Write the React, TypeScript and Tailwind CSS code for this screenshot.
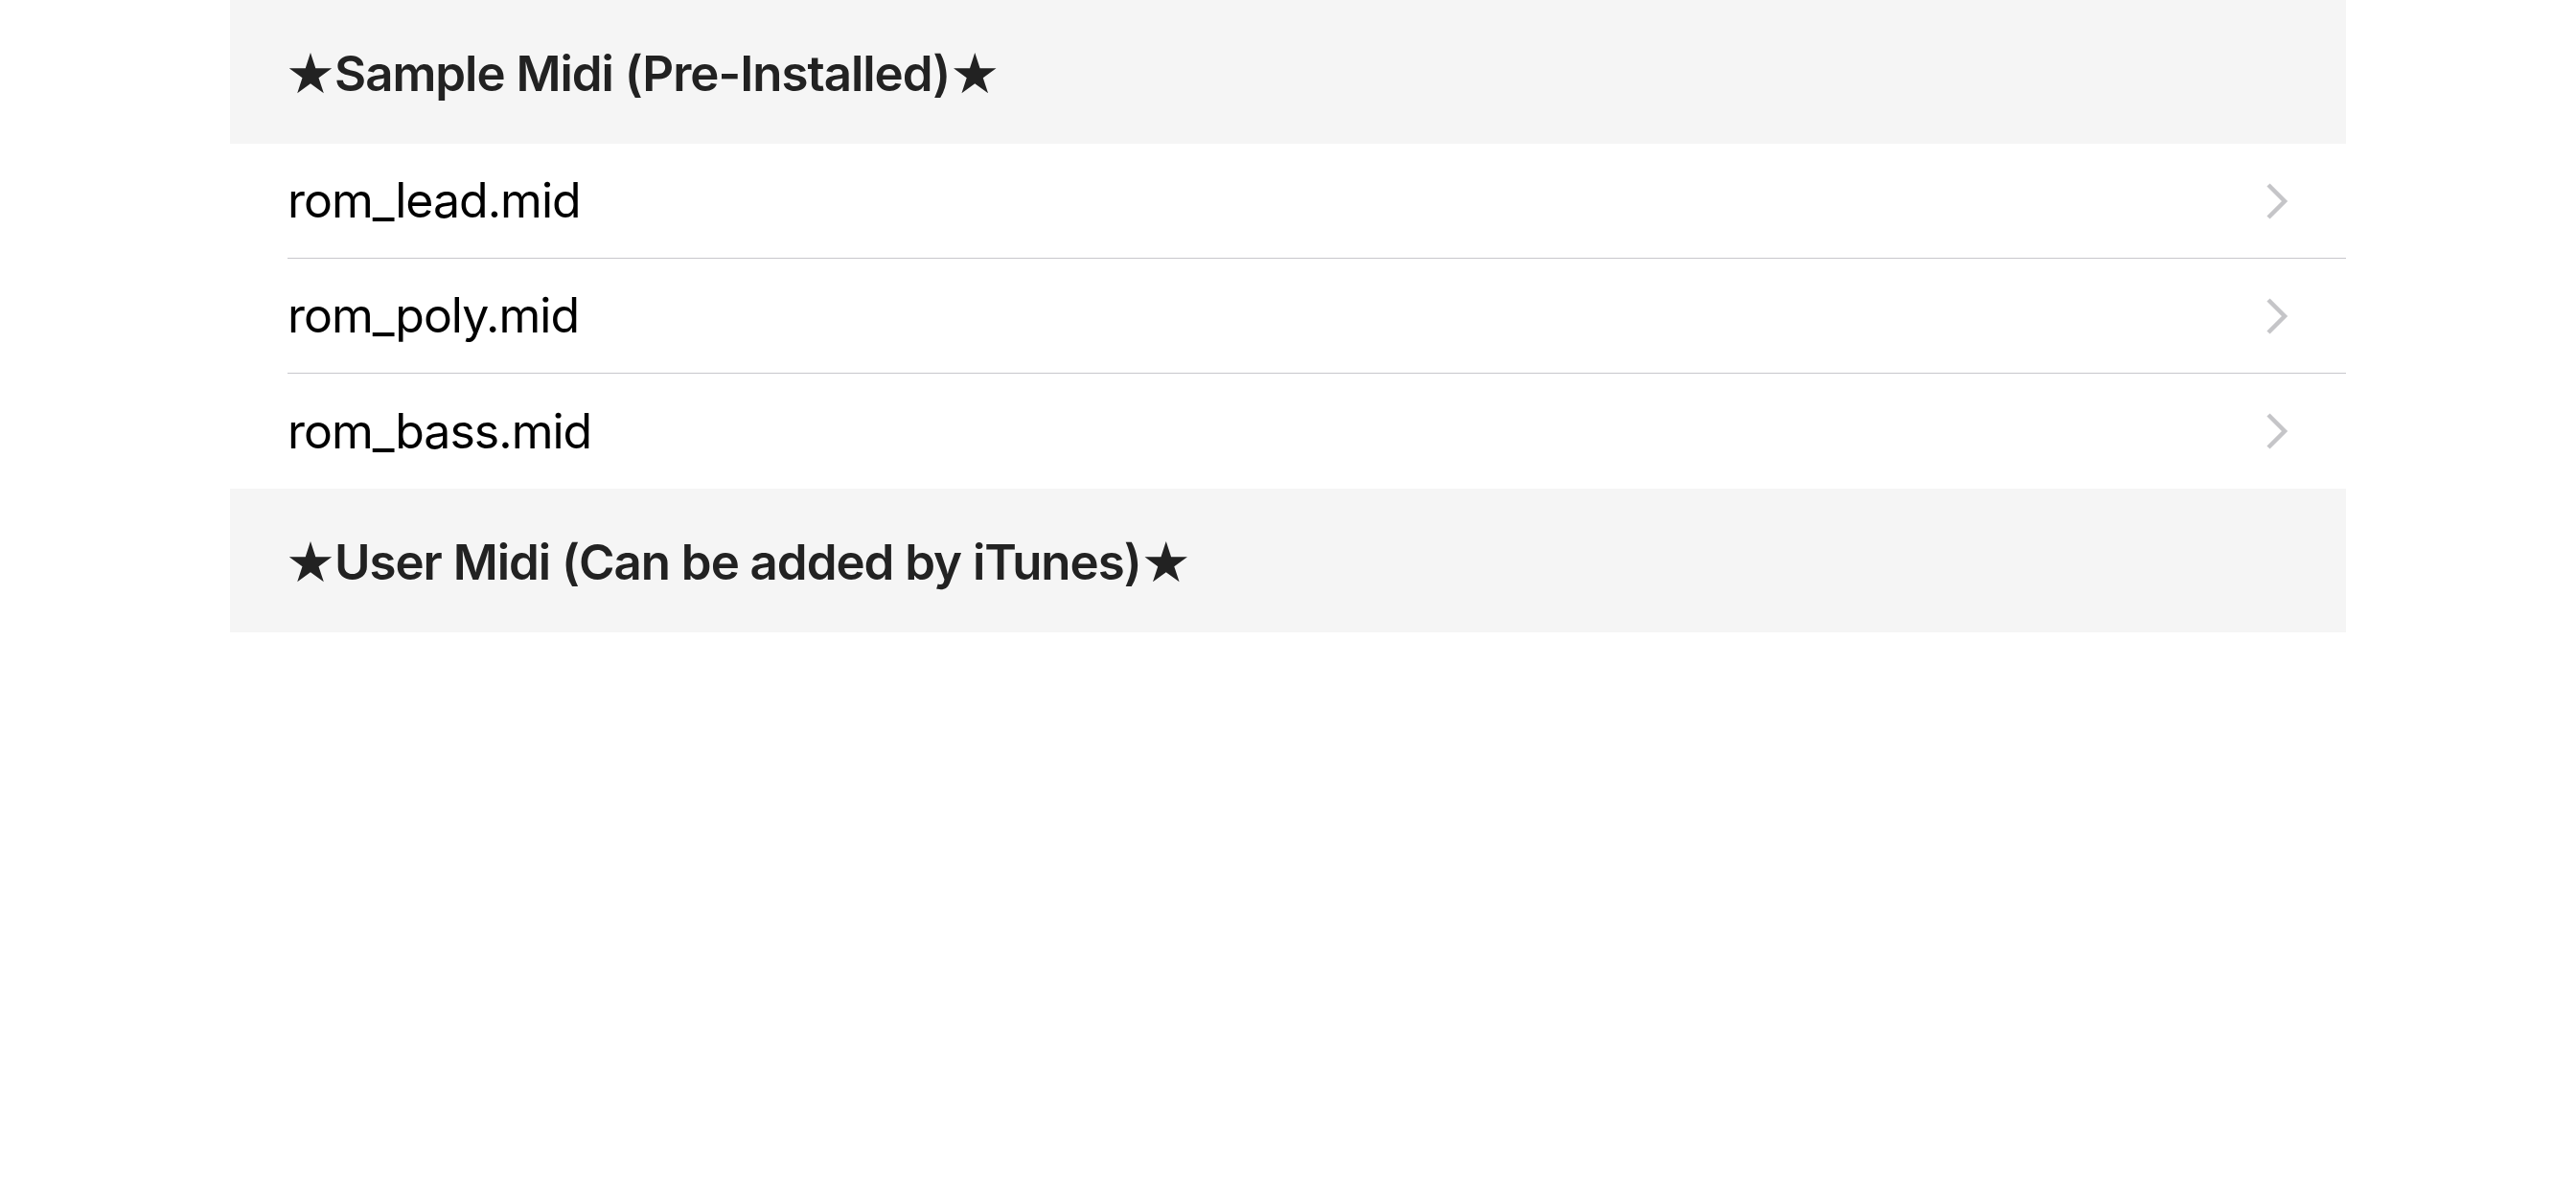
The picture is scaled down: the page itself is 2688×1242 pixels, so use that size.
const sampleFiles = ["rom_lead.mid", "rom_poly.mid", "rom_bass.mid"];

function Star() {
  return <span className="font-['DejaVu_Sans'] text-[58px] leading-none font-normal">★</span>;
}

function SectionHeader({ title }: { title: string }) {
  return (
    <div className="flex h-[150px] items-center bg-[#f5f5f5] pl-[58px] pt-[4px] text-[51px] font-semibold tracking-[-0.02em] text-[#222222]">
      <Star />
      <span>{title}</span>
      <Star />
    </div>
  );
}

function Chevron() {
  return (
    <svg width="24" height="40" viewBox="0 0 24 40" fill="none" aria-hidden>
      <polyline
        points="3,3 20,20 3,37"
        stroke="#c5c5c8"
        strokeWidth="4.5"
        strokeLinecap="butt"
        strokeLinejoin="miter"
      />
    </svg>
  );
}

function FileRow({ name, last }: { name: string; last: boolean }) {
  return (
    <div className="bg-white pl-[60px]">
      <div
        className={
          "flex h-[120px] items-center justify-between pr-[60px] " +
          (last ? "" : "border-b border-[#c8c7cc]")
        }
      >
        <span className="text-[50px] tracking-[-0.02em] text-black">{name}</span>
        <Chevron />
      </div>
    </div>
  );
}

export default function App() {
  return (
    <div className="min-h-[1242px] bg-white px-[240px] font-['Inter',_'Liberation_Sans',_sans-serif]">
      <SectionHeader title="Sample Midi (Pre-Installed)" />
      {sampleFiles.map((f, i) => (
        <FileRow key={f} name={f} last={i === sampleFiles.length - 1} />
      ))}
      <SectionHeader title="User Midi (Can be added by iTunes)" />
    </div>
  );
}
